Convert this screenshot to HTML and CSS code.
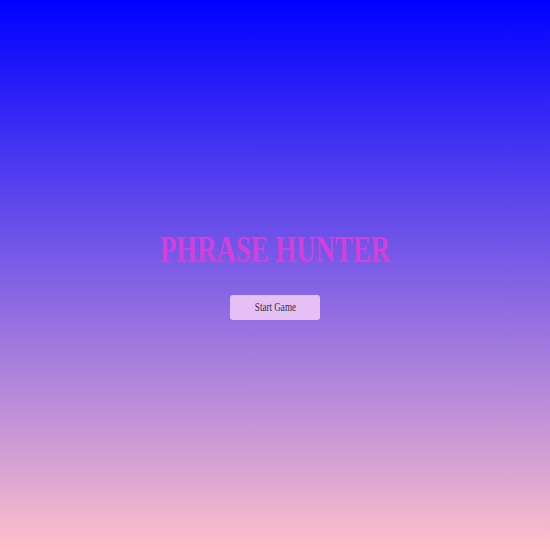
FILE: index.html
```html
<!DOCTYPE html>
<html>
<head>
<meta charset="utf-8">
<link rel="stylesheet" href="styles.css">
</head>
<body>
<main class="start">
  <h1 class="title"><span class="squeeze">PHRASE HUNTER</span></h1>
  <button class="btn"><span class="squeeze">Start Game</span></button>
</main>
</body>
</html>
```
FILE: styles.css
```css
html, body {
  margin: 0;
  padding: 0;
}
body {
  width: 550px;
  height: 550px;
  background: linear-gradient(to bottom, #0000ff, #ffc0cb);
  font-family: "Liberation Serif", "Times New Roman", serif;
}
.start {
  height: 100%;
  display: flex;
  flex-direction: column;
  align-items: center;
  justify-content: center;
  gap: 27px;
}
.title {
  margin: 0;
  font-size: 37px;
  line-height: 37px;
  font-weight: bold;
  color: #d33fda;
  white-space: nowrap;
}
.squeeze {
  display: inline-block;
  transform: scaleX(0.725);
}
.btn {
  width: 90px;
  height: 25px;
  border: none;
  border-radius: 3px;
  background: #e6bff5;
  color: #333;
  font-family: "Liberation Serif", "Times New Roman", serif;
  font-size: 13px;
  padding: 0;
  display: flex;
  align-items: center;
  justify-content: center;
  white-space: nowrap;
}
.btn .squeeze {
  transform: scaleX(0.7);
}
```
